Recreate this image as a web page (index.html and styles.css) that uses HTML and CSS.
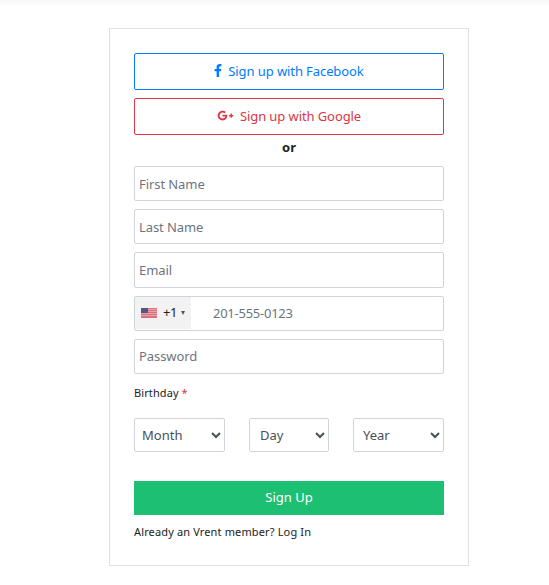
FILE: index.html
```html
<!DOCTYPE html>
<html lang="en">
<head>
<meta charset="utf-8">
<title>Sign Up</title>
<link rel="stylesheet" href="styles.css">
</head>
<body>
<main class="card">
  <a class="social facebook">
    <svg class="fb-icon" viewBox="0 0 320 512"><path fill="currentColor" d="M279.14 288l14.22-92.66h-88.91v-60.13c0-25.35 12.42-50.06 52.24-50.06h40.42V6.26S260.43 0 225.36 0c-73.22 0-121.08 44.38-121.08 124.72v70.62H22.89V288h81.39v224h100.17V288z"/></svg>
    <span>Sign up with Facebook</span>
  </a>
  <a class="social google">
    <svg class="g-icon" viewBox="0 0 640 512"><path fill="currentColor" d="M386.061 228.496c1.834 9.692 3.143 19.384 3.143 31.956C389.204 370.205 315.599 448 204.8 448c-106.084 0-192-85.915-192-192s85.916-192 192-192c51.864 0 95.083 18.859 128.611 50.292l-52.126 50.03c-14.145-13.621-39.028-29.599-76.485-29.599-65.484 0-118.92 54.221-118.92 121.277 0 67.056 53.436 121.277 118.92 121.277 75.961 0 104.513-54.745 108.965-82.773H204.8v-66.009h181.261zm185.406 6.437V179.2h-56.001v55.733h-55.733v56.001h55.733v55.733h56.001v-55.733H627.2v-56.001h-55.733z"/></svg>
    <span>Sign up with Google</span>
  </a>
  <p class="or">or</p>
  <form class="form">
    <input class="field" type="text" placeholder="First Name">
    <input class="field" type="text" placeholder="Last Name">
    <input class="field email" type="text" placeholder="Email">
    <div class="phone">
      <div class="country">
        <svg class="flag" viewBox="0 0 16 10" shape-rendering="crispEdges">
          <path fill="#e8a3ab" d="M0 0h16v10H0z"/>
          <path fill="#d9707e" d="M0 0h16v1H0zM0 2h16v1H0zM0 4h16v1H0zM0 6h16v1H0zM0 8h16v2H0z"/>
          <path fill="#535688" d="M0 0h7v5H0z"/>
        </svg>
        <span class="code">+1</span>
        <i class="caret"></i>
      </div>
      <input class="number" type="tel" placeholder="201-555-0123">
    </div>
    <input class="field password" type="password" placeholder="Password">
    <div class="label">Birthday <span class="required">*</span></div>
    <div class="dates">
      <select class="select"><option>Month</option></select>
      <select class="select day"><option>Day</option></select>
      <select class="select year"><option>Year</option></select>
    </div>
    <button class="submit" type="button">Sign Up</button>
  </form>
  <p class="login">Already an Vrent member? <a>Log In</a></p>
</main>
</body>
</html>
```
FILE: styles.css
```css
* { box-sizing: border-box; }
body {
  margin: 0;
  padding-top: 28px;
  min-height: 585px;
  background: linear-gradient(#f8f8f8, #fff 7px) no-repeat;
  font: 13px/20px "Noto Sans", sans-serif;
  color: #222;
}
.card {
  width: 360px;
  height: 538px;
  margin-left: 109px;
  padding: 24px;
  border: 1px solid #dee2e6;
  background: #fff;
}
.social {
  display: flex;
  align-items: center;
  justify-content: center;
  height: 37px;
  margin-bottom: 8px;
  padding-bottom: 2px;
  border: 1px solid;
  border-radius: 2px;
  letter-spacing: -0.09px;
}
.facebook { color: #007bff; }
.google { color: #dc3545; margin-bottom: 2px; }
.fb-icon { width: 8px; height: 13px; margin-right: 6px; }
.g-icon { width: 17px; height: 13px; margin-right: 6px; }
.or {
  margin: 0;
  height: 29px;
  font-weight: 700;
  text-align: center;
}
.form { display: flex; flex-direction: column; }
.field, .phone {
  width: 100%;
  height: 35px;
  margin: 0 0 8px;
  border: 1px solid #ced4da;
  border-radius: 2px;
  background: #fff;
}
.field { padding: 0 4px; font: inherit; letter-spacing: -0.08px; }
.email { height: 36px; }
.password { padding-bottom: 2px; }
input::placeholder { color: #6c757d; opacity: 1; }
.phone { display: flex; }
.country {
  display: flex;
  align-items: center;
  width: 56px;
  height: 32px;
  padding-left: 6px;
  background: #f2f2f2;
}
.flag { width: 16px; height: 10px; margin-right: 6px; }
.code { margin-top: -2px; letter-spacing: -0.4px; }
.caret {
  margin-left: 4px;
  border: 2.5px solid transparent;
  border-top: 4px solid #555;
  border-bottom: 0;
}
.number {
  flex: 1;
  min-width: 0;
  padding: 0 0 2px 22px;
  border: 0;
  background: none;
  font: inherit;
  letter-spacing: -0.25px;
}
.label {
  height: 35px;
  margin-top: 1px;
  font-size: 11px;
  line-height: 20px;
  letter-spacing: 0.1px;
}
.required { color: #dc3545; }
.dates {
  display: grid;
  grid-template-columns: 91px 80px 91px;
  gap: 24px;
  margin-bottom: 29px;
}
.select {
  width: 100%;
  height: 34px;
  padding: 0 2px 0 3px;
  border: 1px solid #ced4da;
  border-radius: 2px;
  background: #fff;
  color: #495057;
  font: inherit;
}
.day { padding-left: 6px; }
.year { padding-left: 5px; }
.submit {
  height: 34px;
  padding: 0 0 2px;
  border: 0;
  background: #1dbf73;
  color: #fff;
  font: inherit;
}
.login { margin: 7px 0 0; font-size: 11px; letter-spacing: 0.14px; }
```
